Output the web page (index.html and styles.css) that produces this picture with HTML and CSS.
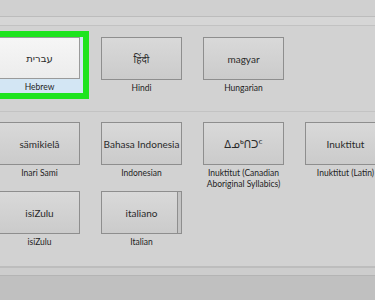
FILE: index.html
```html
<!DOCTYPE html>
<html>
<head>
<meta charset="utf-8">
<link rel="stylesheet" href="styles.css">
</head>
<body>
<div class="window">
  <div class="topbar"></div>
  <div class="substrip"></div>
  <div class="group group-h">
    <div class="item selected">
      <div class="tile light">עברית</div>
      <div class="label">Hebrew</div>
    </div>
    <div class="item">
      <div class="tile">हिंदी</div>
      <div class="label">Hindi</div>
    </div>
    <div class="item">
      <div class="tile">magyar</div>
      <div class="label">Hungarian</div>
    </div>
  </div>
  <div class="sep"></div>
  <div class="group group-i">
    <div class="item">
      <div class="tile">sämikielâ</div>
      <div class="label">Inari Sami</div>
    </div>
    <div class="item">
      <div class="tile">Bahasa Indonesia</div>
      <div class="label">Indonesian</div>
    </div>
    <div class="item">
      <div class="tile">ᐃᓄᒃᑎᑐᑦ</div>
      <div class="label">Inuktitut (Canadian Aboriginal Syllabics)</div>
    </div>
    <div class="item">
      <div class="tile">Inuktitut</div>
      <div class="label">Inuktitut (Latin)</div>
    </div>
    <div class="item">
      <div class="tile">isiZulu</div>
      <div class="label">isiZulu</div>
    </div>
    <div class="item">
      <div class="tile stacked">italiano</div>
      <div class="label">Italian</div>
    </div>
  </div>
  <div class="footer"></div>
</div>
</body>
</html>
```

FILE: styles.css
```css
html, body {
  margin: 0;
  padding: 0;
}
body {
  width: 375px;
  height: 300px;
  overflow: hidden;
  background: #d2d2d2;
  font-family: Lato, "DejaVu Sans", "Noto Sans", sans-serif;
  color: #222;
}
.window {
  display: flex;
  flex-direction: column;
  height: 300px;
}
.topbar {
  height: 16px;
  background: #d0d0d0;
  border-bottom: 1px solid #bcbcbc;
}
.substrip {
  height: 8px;
  background: #d6d6d6;
  border-bottom: 1px solid #c2c2c2;
}
.group {
  display: grid;
  grid-template-columns: repeat(4, 81px);
  column-gap: 21px;
  margin-left: -1px;
}
.group-h {
  margin-top: 11px;
  height: 60px;
}
.group-i {
  margin-top: 10px;
  row-gap: 1px;
}
.sep {
  margin-top: 14px;
  height: 1px;
  background: #c3c3c3;
}
.item {
  display: flex;
  flex-direction: column;
  align-items: stretch;
}
.item.selected {
  background: #d3e6f4;
  height: 56px;
  margin-right: -3px;
  padding-right: 3px;
  box-shadow: 0 0 0 6px #1ee41e;
}
.tile {
  height: 43px;
  box-sizing: border-box;
  border: 1px solid #8e8e8e;
  background: linear-gradient(#d9d9d9, #cbcbcb);
  display: flex;
  align-items: center;
  justify-content: center;
  font-size: 10px;
  white-space: nowrap;
  color: #2a2a2a;
}
.tile.light {
  background: linear-gradient(#f6f6f6, #ececec);
  border-color: #9a9a9a;
}
.tile.stacked {
  box-shadow: inset -3px 0 0 #c4c4c4, inset -4px 0 0 #8e8e8e;
}
.label {
  margin-top: 3px;
  font-size: 8.5px;
  line-height: 11px;
  text-align: center;
  color: #1e1e1e;
}
.footer {
  margin-top: auto;
  height: 32px;
  border-top: 2px solid #bdbdbd;
  background: linear-gradient(#cdcdcd 0, #cdcdcd 7px, #b4b4b4 7px, #b4b4b4 8px, #c0c0c0 8px);
}
```
